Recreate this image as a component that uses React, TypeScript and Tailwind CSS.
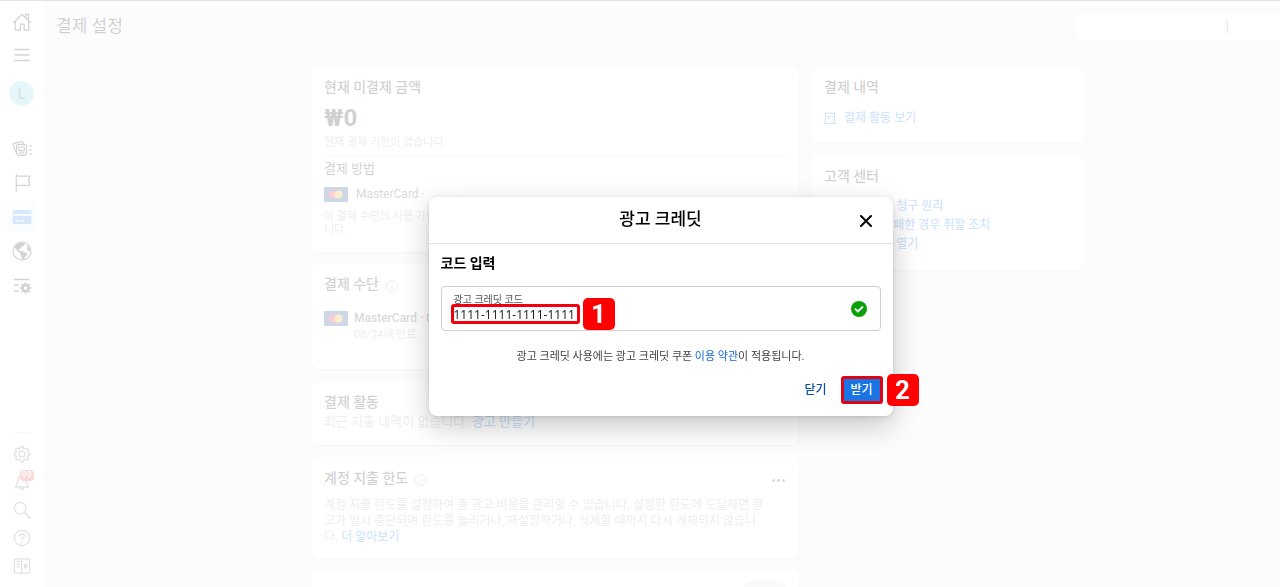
import React from "react";

function Svg({ size = 20, children }: { size?: number; children: React.ReactNode }) {
  return (
    <svg
      width={size}
      height={size}
      viewBox="0 0 20 20"
      fill="none"
      stroke="currentColor"
      strokeWidth="1.2"
      strokeLinecap="round"
      strokeLinejoin="round"
      aria-hidden="true"
    >
      {children}
    </svg>
  );
}

const gearOutline =
  "M8.6 1.8h2.8l.5 2.1 1.5.6 1.9-1.1 2 2-1.1 1.9.6 1.5 2 .4v1.8l-2 .5-.6 1.5 1.1 1.9-2 2-1.9-1.1-1.5.6-.5 2H8.6l-.5-2-1.5-.6-1.9 1.1-2-2 1.1-1.9-.6-1.5-2-.5V9.200l2-.4.6-1.500-1.100-1.900 2-2 1.900 1.100 1.500-.6z";

function Info() {
  return (
    <svg className="mt-1 text-zinc-400" width="12" height="12" viewBox="0 0 12 12" fill="none" stroke="currentColor" aria-hidden="true">
      <circle cx="6" cy="6" r="5.400" />
      <path d="M6 5.300v3.500M6 3.100v1.100" />
    </svg>
  );
}

function MasterCardLogo() {
  return (
    <svg width="24" height="15" viewBox="0 0 24 15" aria-hidden="true">
      <rect width="24" height="15" rx="1" fill="#0a3a82" />
      <circle cx="9" cy="7.500" r="4" fill="#eb001b" />
      <circle cx="14.500" cy="7.500" r="4" fill="#f7a81b" />
    </svg>
  );
}

function NavButton({ label, children, className = "" }: { label: string; children: React.ReactNode; className?: string }) {
  return (
    <button type="button" aria-label={label} className={`flex items-center justify-center ${className}`}>
      {children}
    </button>
  );
}

function Sidebar() {
  return (
    <nav className="flex w-[43px] shrink-0 flex-col items-center justify-between bg-white text-zinc-800">
      <div className="flex w-full flex-col items-center pt-[9px]">
        <NavButton label="홈" className="h-6 w-6">
          <Svg>
            <path d="M1.500 10.500 10 2.500l8.500 8M3.300 9v9.200h5.200v-6h3.700v6h4.500V9M13.800 5.500V2.200h2.700V8" />
          </Svg>
        </NavButton>
        <NavButton label="메뉴" className="mt-[9px] h-6 w-6">
          <Svg>
            <path d="M3 4.500h14M3 10h14M3 15.500h14" strokeWidth="1.500" />
          </Svg>
        </NavButton>
        <div className="mt-3.5 flex h-[25px] w-[25px] items-center justify-center rounded-full bg-[#7fd6e2] text-sm font-bold text-[#3f7f8f]">L</div>
        <NavButton label="광고 관리" className="mt-[31px] h-6 w-6">
          <Svg>
            <path d="M3.500 13 1 4.700l9.500-2.400 1 2.200" />
            <rect x="4.500" y="5.300" width="10" height="11" rx="2.500" />
            <rect x="6.800" y="8" width="5.500" height="3.600" />
            <path d="M7 13.900h5M17 7h2.500M17 11h2.500M17 15h2.500" />
          </Svg>
        </NavButton>
        <NavButton label="페이지" className="mt-2.5 h-6 w-6">
          <Svg>
            <path d="M4.300 1.500v17M4.300 3.200H18l-1.500 4.500 1.500 4.600H4.300" />
          </Svg>
        </NavButton>
        <NavButton label="결제" className="mt-[7px] h-[30px] w-[30px] rounded bg-[#f0f6fe] text-[#1877f2]">
          <svg width="20" height="16" viewBox="0 0 20 16" aria-hidden="true">
            <path d="M3 1h14a2.500 2.500 0 0 1 2.500 2.500V5H.5V3.500A2.500 2.500 0 0 1 3 1zM.5 6.800h19v6A2.200 2.200 0 0 1 17.300 15H2.700A2.200 2.200 0 0 1 .5 12.800z" fill="currentColor" opacity=".85" />
            <path d="M3.500 11.800h3M8 11.800h4" stroke="white" strokeWidth="1.300" />
          </svg>
        </NavButton>
        <NavButton label="비즈니스" className="mt-[7px] h-6 w-6">
          <Svg>
            <circle cx="10" cy="10" r="9" />
            <path d="M2.500 6c1.500-2.700 4-4.300 7.500-4.500l2.500.8-.5 2.200-2.200.5-.8 2-2 .8-.4 1.800 2 .8 1.500-.2 2.400 1.300 2.500.8-.3 2-1.700 1.500-1.500 2.400-1.200.2-.5-3-1.300-1.800.3-1.500-3-2-1.500-2.200zM15.500 4.500l2 3 .5 3-1.500-.5-1.500-2.500z" fill="currentColor" strokeWidth=".5" />
          </Svg>
        </NavButton>
        <NavButton label="환경 설정" className="mt-[11px] h-6 w-6">
          <Svg>
            <path d="M2.500 3.500h14M2.500 9h4M2.500 15h4" strokeWidth="1.300" />
            <circle cx="13.500" cy="12" r="3" strokeWidth="2.400" />
            <path d="M13.500 7.200v1M13.500 15.800v1M8.700 12h1M17.300 12h1M10.100 8.600l.7.7M16.200 14.700l.7.7M16.900 8.600l-.7.7M10.800 14.700l-.7.7" strokeWidth="2" />
          </Svg>
        </NavButton>
      </div>

      <div className="flex w-full flex-col items-center pb-[7px] text-zinc-500">
        <hr className="mb-[7px] w-[18px] border-zinc-300" />
        <NavButton label="설정" className="h-7 w-7">
          <Svg size={18}>
            <path d={gearOutline} strokeWidth="1.500" />
            <circle cx="10" cy="10" r="3.200" strokeWidth="1.500" />
          </Svg>
        </NavButton>
        <NavButton label="알림" className="relative h-7 w-7">
          <Svg size={18}>
            <path d="M2.500 15.500c2-1.600 2.500-3.500 2.700-6.500.2-3.500 2-6 4.800-6s4.600 2.500 4.800 6c.2 3 .7 4.900 2.700 6.500zM7.500 15.800c.3 3 4.700 3 5 0" strokeWidth="1.500" />
          </Svg>
          <span className="absolute top-0.5 left-3 flex h-[11px] items-center rounded-sm bg-[#f5333f] px-0.5 text-[9px] leading-none font-medium text-white">99</span>
        </NavButton>
        <NavButton label="검색" className="h-7 w-7">
          <Svg size={18}>
            <circle cx="8" cy="8" r="6.500" strokeWidth="1.400" />
            <path d="m13 13 6 6" strokeWidth="2" />
          </Svg>
        </NavButton>
        <NavButton label="도움말" className="h-7 w-7">
          <Svg size={18}>
            <circle cx="10" cy="10" r="8.500" strokeWidth="1.400" />
            <path d="M7.500 8c0-3.400 5-3.200 5-.2 0 2-2.500 2-2.500 4.200M10 14.300v.4" strokeWidth="1.500" />
          </Svg>
        </NavButton>
        <NavButton label="패널 열기" className="h-7 w-7">
          <Svg size={18}>
            <rect x="1.500" y="2" width="17" height="16" rx="2" strokeWidth="1.400" />
            <path d="M9.500 2v16M4.500 5H7M4.500 8H7M4.500 11h2" strokeWidth="1.400" />
            <path d="m13 7.500 3 2.500-3 2.500z" fill="currentColor" />
          </Svg>
        </NavButton>
      </div>
    </nav>
  );
}

function Card({ children, className = "" }: { children: React.ReactNode; className?: string }) {
  return <section className={`rounded-lg bg-white px-[13px] shadow-sm ${className}`}>{children}</section>;
}

function Heading({ children }: { children: React.ReactNode }) {
  return <h2 className="text-sm leading-5 font-medium text-zinc-900">{children}</h2>;
}

const helpLinks = ["광고 비용 청구 원리", "결제가 실패한 경우 취할 조치", "지원 사례 열기"];

function DocIcon() {
  return (
    <svg width="12" height="12" viewBox="0 0 12 12" fill="none" stroke="currentColor" className="shrink-0" aria-hidden="true">
      <path d="M1.500 11V.8l1.500.7L4.500.8l1.500.7L7.500.8l1.500.7 1.500-.7V11M.2 11.500h11.600M3.500 4.500h3M8 4.500h1M3.500 6.500h3M7 9h2" />
    </svg>
  );
}

function Billing() {
  return (
    <main className="min-w-0 flex-1 bg-[#f0f0f0]">
      <header className="flex items-start justify-between pt-[13px] pl-[13px]">
        <h1 className="text-[17px] leading-6 text-zinc-900">결제 설정</h1>
        <div className="flex h-[26px] w-[203px] items-center rounded-l-md bg-white pl-[148px] text-xs text-zinc-500">)</div>
      </header>

      <div className="flex items-start justify-center gap-3 pt-[26px] pl-[73px]">
        <div className="flex w-[488px] flex-col gap-3">
          <Card className="pt-[11px] pb-4">
            <Heading>현재 미결제 금액</Heading>
            <p className="mt-[7px] text-2xl leading-7 font-bold text-zinc-900">₩0</p>
            <p className="mt-[3px] text-[11px] leading-4 text-zinc-400">현재 결제 기한이 없습니다.</p>
            <hr className="mt-1 border-zinc-200" />
            <h3 className="mt-1 text-[13px] leading-[18px] text-zinc-900">결제 방법</h3>
            <div className="mt-1.5 flex items-center gap-2 text-xs leading-5 text-zinc-700">
              <MasterCardLogo />
              MasterCard ·
            </div>
            <p className="mt-1.5 text-[11px] leading-[13px] text-zinc-400">
              이 결제 수단의 사용 가능
              <br />
              니다.
            </p>
          </Card>

          <Card className="pt-2.5 pb-[27px]">
            <div className="flex items-center gap-[7px]">
              <Heading>결제 수단</Heading>
              <Info />
            </div>
            <div className="mt-3.5 flex gap-1.5">
              <div className="pt-[3px]">
                <MasterCardLogo />
              </div>
              <div>
                <p className="text-xs leading-5 font-medium text-zinc-700">MasterCard · 0</p>
                <p className="text-[11px] leading-3.5 text-zinc-400">08/24에 만료</p>
              </div>
            </div>
          </Card>

          <Card className="pt-[11px] pb-[13px]">
            <Heading>결제 활동</Heading>
            <p className="text-[13px] leading-5 text-zinc-400">
              최근 지출 내역이 없습니다.{" "}
              <a href="#create" className="font-medium text-[#1877f2]">
                광고 만들기
              </a>
            </p>
          </Card>

          <Card className="pt-[11px] pb-3.5">
            <div className="flex items-center justify-between">
              <div className="flex items-center gap-[7px]">
                <Heading>계정 지출 한도</Heading>
                <Info />
              </div>
              <button type="button" aria-label="더 보기" className="flex gap-0.5 pt-1 pr-[1px]">
                <span className="h-[3px] w-[3px] rounded-full bg-zinc-700" />
                <span className="h-[3px] w-[3px] rounded-full bg-zinc-700" />
                <span className="h-[3px] w-[3px] rounded-full bg-zinc-700" />
              </button>
            </div>
            <p className="mt-[9px] text-xs leading-4 whitespace-nowrap text-zinc-400">
              계정 지출 한도를 설정하여 총 광고 비용을 관리할 수 있습니다. 설정한 한도에 도달하면 광
              <br />
              고가 일시 중단되며 한도를 늘리거나, 재설정하거나, 삭제할 때까지 다시 게재되지 않습니
              <br />
              다.{" "}
              <a href="#more" className="font-medium text-[#1877f2]">
                더 알아보기
              </a>
            </p>
          </Card>

          <Card className="flex h-16 justify-end pt-2.5">
            <div className="h-7 w-[42px] rounded-md bg-zinc-200" />
          </Card>
        </div>

        <div className="flex w-[274px] flex-col gap-3">
          <Card className="pt-[11px] pb-[15px]">
            <Heading>결제 내역</Heading>
            <a href="#history" className="mt-[11px] flex items-center gap-2 text-xs leading-5 font-medium text-[#1877f2]">
              <DocIcon />
              결제 활동 보기
            </a>
          </Card>
          <Card className="pt-[11px] pb-4">
            <Heading>고객 센터</Heading>
            <ul className="mt-[11px] text-xs leading-[19px] font-medium text-[#1877f2]">
              {helpLinks.map((text) => (
                <li key={text}>
                  <a href="#help" className="flex items-center gap-2.5">
                    <DocIcon />
                    {text}
                  </a>
                </li>
              ))}
            </ul>
          </Card>
        </div>
      </div>
    </main>
  );
}

function StepBadge({ n, className }: { n: number; className: string }) {
  return (
    <span
      className={`absolute flex h-8 w-8 items-center justify-center rounded-[5px] bg-[#fe0000] text-[26px] leading-none font-bold text-white ${className}`}
    >
      {n}
    </span>
  );
}

function CreditDialog() {
  const [code, setCode] = React.useState("1111-1111-1111-1111");
  return (
    <div className="fixed inset-0 flex items-start justify-center bg-white/80 pt-[197px] pl-[41px]">
      <div
        role="dialog"
        aria-labelledby="dialog-title"
        className="w-[464px] rounded-lg bg-white shadow-[0_10px_28px_rgba(0,0,0,0.22),0_1px_4px_rgba(0,0,0,0.12)]"
      >
        <header className="relative flex h-[47px] items-center justify-center border-b border-zinc-200 pb-0.5">
          <h2 id="dialog-title" className="text-[17px] leading-6 font-medium text-black">
            광고 크레딧
          </h2>
          <button type="button" aria-label="닫기" className="absolute top-3.5 right-[17px] flex h-5 w-5 items-center justify-center">
            <svg width="12" height="12" viewBox="0 0 12 12" stroke="#000" strokeWidth="2" strokeLinecap="round" aria-hidden="true">
              <path d="m1 1 10 10M11 1 1 11" />
            </svg>
          </button>
        </header>

        <div className="px-3 pt-[9px] pb-3.5">
          <h3 className="text-sm leading-5 font-bold text-black">코드 입력</h3>

          <div className="relative mt-[13px] flex h-[45px] items-center justify-between rounded border border-[#ced0d4] pr-[13px] pl-3">
            <div className="flex flex-col pb-0.5">
              <label htmlFor="code" className="text-[10px] leading-[14px] text-zinc-600">
                광고 크레딧 코드
              </label>
              <input
                id="code"
                value={code}
                onChange={(e) => setCode(e.target.value)}
                className='h-4 w-64 bg-transparent p-0 font-["Noto_Sans",sans-serif] text-xs text-zinc-800 outline-none'
              />
            </div>
            <svg width="16" height="16" viewBox="0 0 16 16" aria-hidden="true">
              <circle cx="8" cy="8" r="8" fill="#0aa00a" />
              <path d="m4.500 8.200 2.400 2.300 4.600-4.500" fill="none" stroke="#fff" strokeWidth="1.800" strokeLinecap="round" />
            </svg>
            <span className="pointer-events-none absolute top-[17px] left-[9px] h-5 w-[129px] rounded-[3px] border-[3px] border-[#f0000c]" />
            <StepBadge n={1} className="top-[11px] left-[141px]" />
          </div>

          <p className="mt-[18px] text-center text-[11px] leading-4 text-zinc-700">
            광고 크레딧 사용에는 광고 크레딧 쿠폰{" "}
            <a href="#terms" className="text-[#1469d6]">
              이용 약관
            </a>
            이 적용됩니다.
          </p>

          <div className="mt-[13px] flex justify-end gap-2 text-xs font-medium">
            <button type="button" className="h-6 px-2 text-[#0a51a8]">
              닫기
            </button>
            <div className="relative">
              <button type="button" className="h-6 w-[38px] rounded-[1px] bg-[#1b74e4] text-white outline-3 -outline-offset-1 outline-[#dd0614]">
                받기
              </button>
              <StepBadge n={2} className="-top-1 left-11" />
            </div>
          </div>
        </div>
      </div>
    </div>
  );
}

export default function App() {
  return (
    <div className='flex h-screen overflow-hidden border-t border-zinc-500 font-[Roboto,"Noto_Sans_CJK_KR",sans-serif]'>
      <Sidebar />
      <Billing />
      <CreditDialog />
    </div>
  );
}
